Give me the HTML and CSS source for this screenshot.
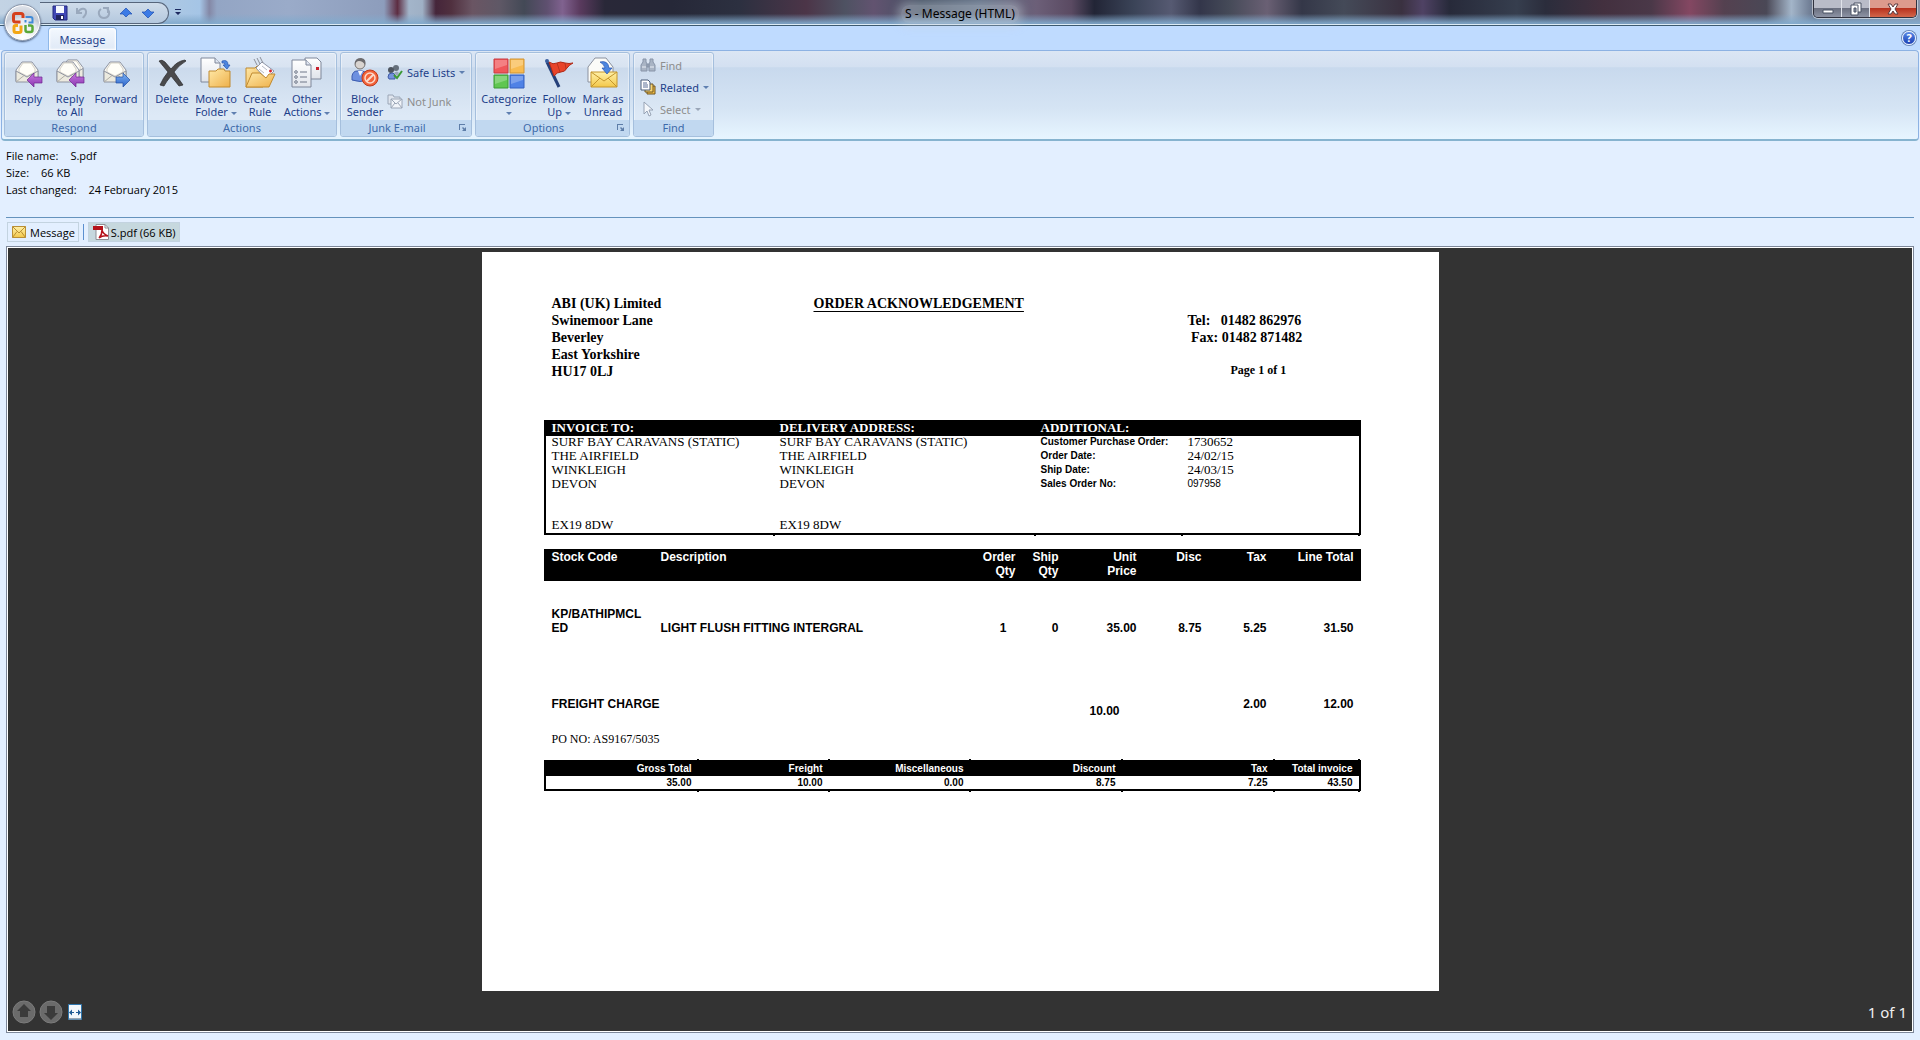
FILE: index.html
```html
<!DOCTYPE html>
<html lang="en">
<head>
  <meta charset="UTF-8" />
  <meta name="viewport" content="width=device-width, initial-scale=1.0" />
  <title>S - Message (HTML)</title>
  <link rel="stylesheet" href="styles.css">
</head>
<body>
  <!-- Shared gradients and the envelope used by several icons -->
  <svg class="defs" width="0" height="0" aria-hidden="true">
    <defs>
      <linearGradient id="gFolder" x1="0" y1="0" x2="1" y2="1"><stop offset="0" stop-color="#ffe9a8"/><stop offset="1" stop-color="#eeb04a"/></linearGradient>
      <linearGradient id="gPaper" x1="0" y1="0" x2="0" y2="1"><stop offset="0" stop-color="#ffffff"/><stop offset="1" stop-color="#dfe3ea"/></linearGradient>
      <linearGradient id="gPurple" x1="0" y1="0" x2="0" y2="1"><stop offset="0" stop-color="#c77be0"/><stop offset="1" stop-color="#8a35b0"/></linearGradient>
      <linearGradient id="gBlue" x1="0" y1="0" x2="0" y2="1"><stop offset="0" stop-color="#7db4f5"/><stop offset="1" stop-color="#2c62c8"/></linearGradient>
      <linearGradient id="gYellow" x1="0" y1="0" x2="0" y2="1"><stop offset="0" stop-color="#fff0a8"/><stop offset="1" stop-color="#f3c84a"/></linearGradient>
      <symbol id="envelope" viewBox="0 0 24 24">
        <path d="M1 10 7 2h10l6 8v11H1z" fill="#f7f6f1" stroke="#8e93a0"/>
        <path d="M4 12V9l4-6h8l4 6v3l-8 4z" fill="#fffef8" stroke="#c6c2b4" stroke-width=".7"/>
        <path d="M1 11 12 17l11-6v11H1z" fill="#eceadf" stroke="#8e93a0"/>
        <path d="M1 22 9 15.500M23 22 15 15.500" stroke="#b0aea6" fill="none"/>
      </symbol>
    </defs>
  </svg>

  <header class="titlebar">
    <div class="quick-access">
      <button aria-label="Save"><svg viewBox="0 0 16 16" width="16" height="16"><path d="M1 1h14v14H3l-2-2z" fill="#3f46b5" stroke="#23287e"/><path d="M4 1h8v7H4z" fill="#f4f7ff"/><path d="M4 10h8v5H4z" fill="#1f2360"/><path d="M9 11h2v3H9z" fill="#fff"/></svg></button>
      <button aria-label="Undo" disabled><svg viewBox="0 0 16 16" width="16" height="16" fill="none" stroke="#9aa9bd" stroke-width="2"><path d="M3 3v5h5M4 7c3-5 9-4 8 1-.500 3-2 3-3 5"/></svg></button>
      <button aria-label="Redo" disabled><svg viewBox="0 0 16 16" width="16" height="16" fill="none" stroke="#9aa9bd" stroke-width="2"><path d="M5 4C1 7 3 13 8 13s7-6 3-9M12 8V3H7"/></svg></button>
      <button aria-label="Previous item"><svg viewBox="0 0 16 16" width="16" height="16"><path d="M8 3 14 9h-3l-3 3-3-3H2z" fill="#3c7be6" stroke="#1c4db0" stroke-width=".7"/></svg></button>
      <button aria-label="Next item"><svg viewBox="0 0 16 16" width="16" height="16"><path d="M8 13 14 7h-3L8 4 5 7H2z" fill="#3c7be6" stroke="#1c4db0" stroke-width=".7"/></svg></button>
    </div>
    <button class="customize" aria-label="Customize Quick Access Toolbar"><svg viewBox="0 0 8 8" width="8" height="8"><path d="M1 0h6v1H1zM1 3h6L4 6z" fill="#1d2a60"/></svg></button>
    <h1 class="window-title">S - Message (HTML)</h1>
    <div class="window-buttons">
      <button class="min" aria-label="Minimize"><svg viewBox="0 0 14 14" width="14" height="14"><path d="M2 8h10v3H2z" fill="#fff" stroke="#4b5264"/></svg></button>
      <button class="restore" aria-label="Restore Down"><svg viewBox="0 0 14 14" width="14" height="14"><path d="M5 1h7v9H5z" fill="#fff" stroke="#4b5264"/><path d="M2 3h7v10H2z" fill="#fff" stroke="#4b5264"/><path d="M5 6h2v4H5z" fill="#8d95a6" stroke="#4b5264"/></svg></button>
      <button class="close" aria-label="Close"><svg viewBox="0 0 14 14" width="14" height="14"><path d="M2 2h3l2 3 2-3h3L9 7l3 5H9L7 9l-2 3H2l3-5z" fill="#fff" stroke="#5b3a3f"/></svg></button>
    </div>
  </header>

  <button class="office-button" aria-label="Office Button">
    <svg viewBox="0 0 24 24" width="24" height="24" fill="none" stroke-width="3">
      <path d="M9.500 11H4.500q-2 0-2-2V4.500q0-2 2-2H10q2 0 2 2V7" stroke="#d5401c"/>
      <path d="M14.500 6h5q2 0 2 2v3.500h-4" stroke="#3f8ad8" stroke-width="2"/>
      <path d="M14.500 9v2.500" stroke="#3f8ad8" stroke-width="2"/>
      <path d="M10 14.500V20q0 1.500-2 1.500H5q-2 0-2-2V16q0-1.500 2-1.500h2" stroke="#f3a716"/>
      <path d="M14.500 14v5q0 2 2 2h3q2 0 2-2v-3q0-1.500-2-1.500H17" stroke="#5aa83a" stroke-width="2.500"/>
    </svg>
  </button>

  <nav class="tab-strip">
    <button class="ribbon-tab">Message</button>
    <button class="help" aria-label="Help">?</button>
  </nav>

  <div class="ribbon">
    <section class="group respond">
      <div class="tools">
        <button class="big"><svg viewBox="0 0 32 32" width="32" height="32"><use href="#envelope" x="3" y="3" width="24" height="24"/><path d="M15 23l7-7v4h8v6h-8v4z" fill="url(#gPurple)" stroke="#6d2790" stroke-width=".7"/></svg><span>Reply</span></button>
        <button class="big"><svg viewBox="0 0 32 32" width="32" height="32"><use href="#envelope" x="7" y="1" width="23" height="23"/><use href="#envelope" x="2" y="3" width="24" height="24"/><path d="M15 23l7-7v4h8v6h-8v4z" fill="url(#gPurple)" stroke="#6d2790" stroke-width=".7"/></svg><span>Reply<br>to All</span></button>
        <button class="big wide"><svg viewBox="0 0 32 32" width="32" height="32"><use href="#envelope" x="3" y="3" width="24" height="24"/><path d="M30 23l-7-7v4h-7v6h7v4z" fill="url(#gBlue)" stroke="#234fa0" stroke-width=".7"/></svg><span>Forward</span></button>
      </div>
      <h2>Respond</h2>
    </section>

    <section class="group actions">
      <div class="tools">
        <button class="big"><svg viewBox="0 0 32 32" width="32" height="32"><path d="M3 4q3-2 6 1l6 7q6-8 14-9l1 1q-7 4-12 11l9 13-4 1q-4-5-8-10-5 6-7 10l-4-1q3-7 8-13-5-6-9-11z" fill="#4a4a4c" stroke="#2a2a2c" stroke-width=".7"/></svg><span>Delete</span></button>
        <button class="big"><svg viewBox="0 0 32 32" width="32" height="32"><path d="M1 1h14l5 5v19H1z" fill="url(#gPaper)" stroke="#7e879a"/><path d="M15 1v5h5" fill="#dfe5f0" stroke="#7e879a"/><path d="M9 14h7l2-2h6l1 2h5v16H9z" fill="url(#gFolder)" stroke="#c08a30"/><path d="M22 4q6-2 6 4h2l-3 4-4-4h2q0-3-3-2z" fill="#4d86e0" stroke="#2855b0" stroke-width=".7"/></svg><span>Move to<br>Folder <i class="caret"></i></span></button>
        <button class="big"><svg viewBox="0 0 32 32" width="32" height="32"><path d="M2 11h9l2-2h6v21H2z" fill="url(#gFolder)" stroke="#c08a30"/><path d="M12 11 18 5l12 9-8 8z" fill="#fdfdff" stroke="#8f96a8"/><path d="M10 2l3 6M13 1l3 6M16 0l3 6" stroke="#8b8f99" fill="none"/><path d="M15 12l5 4M18 9l5 4" stroke="#b5bac6"/><path d="M25 14h3M26.500 12.500v3" stroke="#d5262e" stroke-width="1.500"/><path d="M2 30l6-14h8l6 5 3-4h6l-6 13z" fill="url(#gFolder)" stroke="#c08a30"/></svg><span>Create<br>Rule</span></button>
        <button class="big other"><svg viewBox="0 0 32 32" width="32" height="32"><path d="M14 1h12l4 4v17H14z" fill="url(#gPaper)" stroke="#7e879a"/><path d="M25 10h3v3h-3z" fill="#c8202c"/><path d="M1 3h14l5 5v22H1z" fill="url(#gPaper)" stroke="#7e879a"/><path d="M15 3v5h5" fill="#dfe5f0" stroke="#7e879a"/><g fill="none" stroke="#6f7788"><circle cx="5" cy="15" r="1.300"/><circle cx="5" cy="20" r="1.300"/><circle cx="5" cy="25" r="1.300"/><path d="M9 15h7M9 20h7M9 25h7"/></g></svg><span>Other<br>Actions <i class="caret"></i></span></button>
      </div>
      <h2>Actions</h2>
    </section>

    <section class="group junk">
      <div class="tools">
        <button class="big"><svg viewBox="0 0 32 32" width="32" height="32"><path d="M3 23V19q1-5 5-5h5q6 1 6 6v3q-8 3-16 0z" fill="#6d90e0" stroke="#3c5cb0"/><path d="M9 14h5l-3 5z" fill="#f2f5ff"/><circle cx="11" cy="7" r="5" fill="#d9d4d0" stroke="#77726f"/><path d="M6 8q-1-7 6-7 6 1 4 7-2-4-6-4-3 0-4 4z" fill="#6c6b6e"/><circle cx="21" cy="21" r="8" fill="#f2633a" stroke="#c03a1c"/><circle cx="21" cy="21" r="5" fill="none" stroke="#fbd9cc" stroke-width="1.500"/><path d="M17.500 24.500l7-7" stroke="#fbd9cc" stroke-width="2"/></svg><span>Block<br>Sender</span></button>
        <div class="stack two">
          <button class="small"><svg viewBox="0 0 16 16" width="16" height="16"><circle cx="9" cy="4" r="3" fill="#66707c"/><circle cx="4" cy="6" r="3" fill="#4d545e"/><path d="M1 13q0-4 4-4 3 0 3 3v3H2z" fill="#7593dc" stroke="#3e5aa6"/><path d="M7 9q3-3 5 0l-2 3z" fill="#9aa6bd"/><path d="M7 11l3 3 5-7" fill="none" stroke="#3c9a35" stroke-width="2"/></svg>Safe Lists <i class="caret"></i></button>
          <button class="small" disabled><svg viewBox="0 0 16 16" width="16" height="16" fill="#dfe5ee" stroke="#9ba6b6"><path d="M1 11V2h5l1 2h6v7z"/><path d="M4 6h11v9H4z" fill="#f1f4f9"/><path d="M4 6l5 5 6-5M4 15l4-5M15 15l-4-5" fill="none"/></svg>Not Junk</button>
        </div>
      </div>
      <h2>Junk E-mail</h2>
      <button class="launcher" aria-label="Junk E-mail options"><svg viewBox="0 0 8 8" width="8" height="8"><path d="M0 6V0h6v1H1v5zM7 3v4H3l1.500-1.500L3 4l1-1 1.500 1.500z" fill="#5d7da8"/></svg></button>
    </section>

    <section class="group options">
      <div class="tools">
        <button class="big wide"><svg viewBox="0 0 32 32" width="32" height="32"><path d="M1 2h14v14H1z" fill="#f0565a" stroke="#c83a40"/><path d="M17 2h14v14H17z" fill="#f8bb50" stroke="#d09232"/><path d="M1 18h14v13H1z" fill="#5fc651" stroke="#3a9a34"/><path d="M17 18h14v13H17z" fill="#4f82e6" stroke="#3460c0"/><path d="M2 3h12v5q-6 2-12 4zM18 3h12v5q-6 2-12 4zM2 19h12v4q-6 2-12 4zM18 19h12v4q-6 2-12 4z" fill="#fff" opacity=".25"/></svg><span>Categorize<br><i class="caret"></i></span></button>
        <button class="big"><svg viewBox="0 0 32 32" width="32" height="32"><path d="M4 5l12 25" stroke="#25407a" stroke-width="3"/><circle cx="4" cy="4" r="2" fill="#3a5fa0"/><path d="M6 5q4 3 8 1 3-2 8 0 4 1 8 0-4 2-6 5-2 4-6 4-4 0-7 4z" fill="#e8442a" stroke="#b02a18"/><path d="M14 6l3 9M22 6l1 6" stroke="#b93520" fill="none"/></svg><span>Follow<br>Up <i class="caret"></i></span></button>
        <button class="big"><svg viewBox="0 0 32 32" width="32" height="32"><path d="M1 10 8 1h11l7 9v15H1z" fill="#fbfbf8" stroke="#8b919e"/><path d="M4 15h26v15H4z" fill="url(#gYellow)" stroke="#c4952c"/><path d="M4 15l13 9 13-9M4 30l9-9M30 30l-9-9" fill="none" stroke="#c4952c"/><path d="M13 5q8-2 9 6h3l-5 6-5-6h3q-1-4-5-6z" fill="#4d86e0" stroke="#2855b0" stroke-width=".7"/></svg><span>Mark as<br>Unread</span></button>
      </div>
      <h2>Options</h2>
      <button class="launcher" aria-label="Tracking options"><svg viewBox="0 0 8 8" width="8" height="8"><path d="M0 6V0h6v1H1v5zM7 3v4H3l1.500-1.500L3 4l1-1 1.500 1.500z" fill="#5d7da8"/></svg></button>
    </section>

    <section class="group find">
      <div class="tools">
        <div class="stack three">
          <button class="small" disabled><svg viewBox="0 0 16 16" width="16" height="16" fill="#a9b4c4" stroke="#8794a8"><path d="M3 2h3v3l1 2v7H1V8l2-3zM10 2h3v3l2 3v6H9V7l1-2zM7 7h2v3H7z"/><path d="M2 10h4M10 10h4" stroke="#e9eef6"/></svg>Find</button>
          <button class="small"><svg viewBox="0 0 16 16" width="16" height="16"><path d="M7 7h8v8H7z" fill="#f5c044" stroke="#6e5420"/><path d="M5 5h8v8H5z" fill="#f9d573" stroke="#6e5420"/><path d="M1 1h7l2 2v8H1z" fill="#fff" stroke="#4b5c78"/><path d="M3 4h4M3 6h5M3 8h5" stroke="#5a6f96"/></svg>Related <i class="caret"></i></button>
          <button class="small" disabled><svg viewBox="0 0 16 16" width="16" height="16"><path d="M4 1v12l3-3 2 5 2-1-2-5h4z" fill="#f4f7fb" stroke="#96a2b4"/></svg>Select <i class="caret"></i></button>
        </div>
      </div>
      <h2>Find</h2>
    </section>
  </div>

  <dl class="file-info">
    <div><dt>File name:</dt><dd>S.pdf</dd></div>
    <div><dt>Size:</dt><dd>66 KB</dd></div>
    <div><dt>Last changed:</dt><dd>24 February 2015</dd></div>
  </dl>

  <div class="attachments">
    <button class="attachment"><svg viewBox="0 0 14 12" width="14" height="12"><path d="M.5.500h13v11H.500z" fill="url(#gYellow)" stroke="#b98f35"/><path d="M.5.500 7 7l6.500-6.500M.500 11.500 5 5.500M13.500 11.500 9 5.500" fill="none" stroke="#b98f35"/></svg>Message</button>
    <span class="divider"></span>
    <button class="attachment selected"><svg viewBox="0 0 16 16" width="16" height="16"><path d="M3 .500h9l3.500 3.500v11.500H3z" fill="#fff" stroke="#8f8f96"/><path d="M12 .500V4h3.500" fill="none" stroke="#8f8f96"/><path d="M0 2h10v4H0z" fill="#b5121b"/><path d="M9 6q1 4 6 6-5-1-9 2 3-3 3-8z" fill="none" stroke="#b5121b" stroke-width="1.500"/></svg>S.pdf (66 KB)</button>
  </div>

  <main class="viewer">
    <article class="sheet">
      <header class="letterhead">
        <address>ABI (UK) Limited<br>Swinemoor Lane<br>Beverley<br>East Yorkshire<br>HU17 0LJ</address>
        <h2>ORDER ACKNOWLEDGEMENT</h2>
        <div class="contact">
          <p>Tel: &nbsp; 01482 862976<br>&nbsp;Fax: 01482 871482</p>
          <p class="page-no">Page 1 of 1</p>
        </div>
      </header>

      <table class="parties">
        <colgroup><col class="c-invoice"><col class="c-delivery"><col class="c-label"><col></colgroup>
        <thead>
          <tr><th>INVOICE TO:</th><th>DELIVERY ADDRESS:</th><th colspan="2">ADDITIONAL:</th></tr>
        </thead>
        <tbody>
          <tr><td>SURF BAY CARAVANS (STATIC)</td><td>SURF BAY CARAVANS (STATIC)</td><td class="label">Customer Purchase Order:</td><td>1730652</td></tr>
          <tr><td>THE AIRFIELD</td><td>THE AIRFIELD</td><td class="label">Order Date:</td><td>24/02/15</td></tr>
          <tr><td>WINKLEIGH</td><td>WINKLEIGH</td><td class="label">Ship Date:</td><td>24/03/15</td></tr>
          <tr><td>DEVON</td><td>DEVON</td><td class="label">Sales Order No:</td><td class="order-no">097958</td></tr>
          <tr class="postcode"><td>EX19 8DW</td><td>EX19 8DW</td><td></td><td></td></tr>
        </tbody>
      </table>

      <table class="lines">
        <colgroup><col class="c-code"><col><col class="c-order"><col class="c-ship"><col class="c-unit"><col class="c-disc"><col class="c-tax"><col class="c-total"></colgroup>
        <thead>
          <tr><th>Stock Code</th><th>Description</th><th>Order<br>Qty</th><th>Ship<br>Qty</th><th>Unit<br>Price</th><th>Disc</th><th>Tax</th><th>Line Total</th></tr>
        </thead>
        <tbody>
          <tr class="item"><td>KP/BATHIPMCL<br>ED</td><td>LIGHT FLUSH FITTING INTERGRAL</td><td class="qty">1</td><td>0</td><td>35.00</td><td>8.75</td><td>5.25</td><td>31.50</td></tr>
          <tr class="freight"><td colspan="2">FREIGHT CHARGE</td><td></td><td></td><td class="charge">10.00</td><td></td><td>2.00</td><td>12.00</td></tr>
        </tbody>
      </table>

      <p class="po-number">PO NO: AS9167/5035</p>

      <table class="totals">
        <colgroup><col class="c-gross"><col class="c-freight"><col class="c-misc"><col class="c-discount"><col class="c-discount"><col></colgroup>
        <thead>
          <tr><th>Gross Total</th><th>Freight</th><th>Miscellaneous</th><th>Discount</th><th>Tax</th><th>Total invoice</th></tr>
        </thead>
        <tbody>
          <tr><td>35.00</td><td>10.00</td><td>0.00</td><td>8.75</td><td>7.25</td><td>43.50</td></tr>
        </tbody>
      </table>
    </article>

    <footer class="viewer-bar">
      <button class="round" aria-label="Previous page"><svg viewBox="0 0 24 24" width="24" height="24"><circle cx="12" cy="12" r="11" fill="#6b6b6b" stroke="#7c7c7c"/><path d="M12 4l7 7h-3v6H8v-6H5z" fill="#3b3b3b"/></svg></button>
      <button class="round" aria-label="Next page"><svg viewBox="0 0 24 24" width="24" height="24"><circle cx="12" cy="12" r="11" fill="#6b6b6b" stroke="#7c7c7c"/><path d="M12 20l7-7h-3V6H8v7H5z" fill="#3b3b3b"/></svg></button>
      <button class="fit" aria-label="Fit width"><svg viewBox="0 0 14 16" width="14" height="16"><path d="M.500.500h13v15H.500z" fill="#f3f7fb" stroke="#2f76ad"/><path d="M1 14h12v1.500H1z" fill="#9aa7b2"/><path d="M1 8.500 4 5.500V8h2v1H4v2.500zM13 8.500 10 5.500V8H8v1h2v2.500z" fill="#1f5b94"/></svg></button>
      <span class="page-count">1 of 1</span>
    </footer>
  </main>
</body>
</html>
```

FILE: styles.css
```css
:root {
  --window: #e3efff;
  --strip: #bfdbff;
  --ribbon-text: #1e3f8a;
  --group-text: #3e6aaa;
  --disabled: #8d8d8d;
  --viewer: #333333;
}

* {
  box-sizing: border-box;
}

body {
  margin: 0;
  min-height: 100vh;
  display: flex;
  flex-direction: column;
  position: relative;
  background: var(--window);
  font-family: 'Noto Sans', 'Open Sans', sans-serif;
  font-size: 11px;
  color: #000;
}

button {
  font: inherit;
  color: inherit;
  background: none;
  border: none;
  padding: 0;
}

h1, h2, p, dl, dd {
  margin: 0;
}

.defs {
  position: absolute;
}

/* Title bar */
.titlebar {
  height: 26px;
  display: flex;
  align-items: flex-start;
  border-bottom: 1px solid #3d5a70;
  box-shadow: inset 0 -1px #dcebf5;
  background:
    linear-gradient(to bottom, rgba(150, 180, 210, 0) 55%, rgba(130, 170, 205, 0.9) 92%),
    linear-gradient(to right, #c3d3e4 0, #b0c9e2 8%, #a5c5e6 10.4%, #8488a6 10.9%, #93a5c4 11.3%,
      #9aabc9 15%, #8d9dbc 20%, #5d2d42 20.7%, #a3b5ca 21.3%, #9fb0c5 22%, #45253a 22.7%,
      #50303f 23.5%, #6a5563 24.6%, #5f5866 26%, #434956 27.3%, #5f5070 28.5%, #80628f 29.3%,
      #5a3a5e 30.2%, #292838 31.5%, #262838 35%, #2c3040 38.5%, #4c3548 42%, #4e5262 44%,
      #625370 45.5%, #435062 48%, #5b6a80 51%, #6c5f78 54%, #5a4a62 55.8%, #222536 57%,
      #3a4357 59%, #565a72 61%, #33364a 62.5%, #454a58 64%, #6a6074 66%, #343748 67.8%,
      #444a58 70%, #3a3140 73%, #4f4264 74.1%, #272a3a 75.5%, #363e4e 79%, #2b2d3c 80.5%,
      #43303f 83.5%, #4a3848 86%, #844762 88%, #544150 89.8%, #4a4856 92%, #a3b5c9 93.3%,
      #65728a 94.5%, #8793a8 100%);
}

.quick-access {
  display: flex;
  align-items: center;
  gap: 6px;
  height: 22px;
  margin: 2px 0 0 40px;
  padding: 0 12px;
  border: 1px solid #56657b;
  border-left: none;
  border-radius: 0 12px 12px 0;
  background: linear-gradient(#cfdcea, #b4c8de);
}

.quick-access button,
.customize,
.window-buttons button {
  display: flex;
  align-items: center;
  justify-content: center;
}

.customize {
  height: 25px;
  width: 18px;
}

.window-title {
  position: absolute;
  left: 50%;
  top: 5px;
  transform: translateX(-50%);
  padding: 0 4px;
  border-radius: 8px;
  font-size: 12px;
  font-weight: 400;
  line-height: 18px;
  background: rgba(200, 208, 218, 0.4);
  box-shadow: 0 0 8px 4px rgba(200, 208, 218, 0.4);
}

.window-buttons {
  display: flex;
  height: 18px;
  margin: 0 3px 0 auto;
  border: 1px solid #30323f;
  border-top: none;
  border-radius: 0 0 5px 5px;
  overflow: hidden;
  box-shadow: 0 0 0 1px rgba(255, 255, 255, 0.5);
}

.window-buttons button {
  width: 28px;
  border-right: 1px solid #e0e3ea;
  background: linear-gradient(#b9bcc8 45%, #6b7080 50%, #8d93a4);
}

.window-buttons .close {
  width: 46px;
  border-right: none;
  background: linear-gradient(#dd9a8c 45%, #b8321e 50%, #d3664a);
}

.office-button {
  position: absolute;
  left: 4px;
  top: 4px;
  width: 37px;
  height: 37px;
  display: flex;
  align-items: center;
  justify-content: center;
  border-radius: 50%;
  border: 1px solid #8a95a8;
  background: radial-gradient(circle at 50% 90%, #ffffff 0, #e8ebf0 45%, #c4cad6 60%, #f1f3f7 100%);
  box-shadow: 0 1px 2px #44597a, inset 0 0 0 1px #fff;
}

/* Tab strip */
.tab-strip {
  display: flex;
  align-items: flex-end;
  height: 24px;
  padding: 0 4px 0 48px;
  background: var(--strip);
}

.ribbon-tab {
  width: 69px;
  height: 23px;
  color: var(--ribbon-text);
  border: 1px solid #8fb8e8;
  border-bottom: none;
  border-radius: 4px 4px 0 0;
  background: linear-gradient(#f3f8fe, #dfe9f6);
  box-shadow: inset 0 0 2px 1px #fff;
}

.help {
  width: 14px;
  height: 14px;
  margin: 0 0 5px auto;
  border-radius: 50%;
  border: 1px solid #e9f1fc;
  background: linear-gradient(#5a8ae8, #1b3fb4);
  box-shadow: 0 0 0 1px #6a86b8;
  color: #fff;
  font-weight: 700;
  line-height: 12px;
}

/* Ribbon */
.ribbon {
  display: flex;
  gap: 3px;
  height: 91px;
  margin: 0 1px 1px;
  padding: 1px 2px 2px;
  border: 1px solid #8db2e3;
  border-bottom: 2px solid #86b3cf;
  border-radius: 4px;
  background: linear-gradient(#dbe6f4 0, #d3e0f1 18%, #c8d9ed 19%, #d5e4f4 65%, #e7f5ff 100%);
}

.group {
  position: relative;
  display: flex;
  flex-direction: column;
  border: 1px solid #a5bfdd;
  border-radius: 3px;
  background: linear-gradient(#e0e9f5 0, #d8e3f1 17%, #cbdaec 18%, #dde9f6 75%);
  box-shadow: inset 0 0 0 1px rgba(255, 255, 255, 0.4);
  overflow: hidden;
}

.respond { width: 140px; }
.actions { width: 190px; }
.junk { width: 132px; }
.options { width: 155px; }
.find { width: 81px; }

.group h2 {
  height: 16px;
  font-size: 11px;
  font-weight: 400;
  line-height: 16px;
  text-align: center;
  color: var(--group-text);
  background: #c1d8f0;
}

.junk h2,
.options h2 {
  padding-right: 18px;
}

.tools {
  flex: 1;
  display: flex;
  padding: 4px 2px 0;
}

.big {
  flex: 0 0 44px;
  display: flex;
  flex-direction: column;
  align-items: center;
  color: var(--ribbon-text);
  line-height: 13px;
  white-space: nowrap;
}

.respond .big {
  flex-basis: 42px;
}

.respond .wide {
  flex-basis: 50px;
}

.actions .other {
  flex-basis: 50px;
}

.options .tools {
  padding-left: 5px;
}

.options .wide {
  flex-basis: 56px;
}

.big span {
  margin-top: 3px;
}

.caret {
  display: inline-block;
  border: 3px solid transparent;
  border-top-color: #5f7fb0;
  border-bottom: none;
  vertical-align: middle;
}

.stack {
  display: flex;
  flex-direction: column;
}

.stack.two {
  gap: 13px;
  padding-top: 7px;
}

.stack.three {
  gap: 6px;
  padding: 0 4px;
}

.small {
  display: flex;
  align-items: center;
  gap: 4px;
  height: 16px;
  color: var(--ribbon-text);
  white-space: nowrap;
}

.small:disabled {
  color: var(--disabled);
}

.small:disabled .caret {
  border-top-color: #9aa6b8;
}

.launcher {
  position: absolute;
  right: 4px;
  bottom: 4px;
  width: 8px;
  height: 8px;
  display: flex;
}

/* Attachment details */
.file-info {
  margin: 5px 6px 0;
  padding-bottom: 19px;
  border-bottom: 1px solid #6593bd;
  font-family: 'Open Sans', 'Noto Sans', sans-serif;
  line-height: 17px;
}

.file-info div {
  display: flex;
  gap: 12px;
}

.attachments {
  display: flex;
  align-items: center;
  gap: 4px;
  padding: 4px 7px;
  font-family: 'Open Sans', 'Noto Sans', sans-serif;
}

.attachment {
  display: flex;
  align-items: center;
  gap: 4px;
  height: 20px;
  padding: 0 3px 0 4px;
  border: 1px solid #c3d3e0;
}

.attachment.selected {
  gap: 2px;
  background: #c6d8de;
}

.divider {
  width: 1px;
  height: 16px;
  background: #5b8fd0;
}

/* Preview pane */
.viewer {
  flex: 1;
  display: flex;
  flex-direction: column;
  margin: 0 6px 7px;
  padding-top: 5px;
  border: 1px solid #7d8799;
  outline: 1px solid #ffffff;
  outline-offset: -2px;
  background: var(--viewer);
}

.sheet {
  width: 100%;
  max-width: 957px;
  min-height: 739px;
  margin: 0 auto;
  padding: 43px 78px 0 62px;
  background: #fff;
  font-family: 'Liberation Serif', serif;
  font-size: 13px;
  line-height: 14px;
}

.letterhead {
  display: grid;
  grid-template-columns: 262px 374px auto;
  height: 125px;
  padding-left: 8px;
  font-size: 14px;
  font-weight: 700;
  line-height: 17px;
}

.letterhead address {
  font-style: normal;
}

.letterhead h2 {
  font-size: 14px;
  text-decoration: underline;
  text-underline-offset: 3px;
}

.contact {
  padding-top: 17px;
  white-space: nowrap;
}

.page-no {
  margin: 16px 0 0 43px;
  font-size: 12px;
}

table {
  width: 100%;
  table-layout: fixed;
  border-collapse: separate;
  border-spacing: 0;
}

th {
  background: #000;
  color: #fff;
  text-align: left;
}

th, td {
  position: relative;
  padding: 0 7px;
  white-space: nowrap;
}

.parties {
  border: 2px solid #000;
  border-top: none;
}

.parties th,
.parties td {
  height: 14px;
  padding: 0 6px;
}

.parties td {
  line-height: 12px;
  vertical-align: top;
}

.parties th {
  height: 16px;
}

.c-invoice { width: 228px; }
.c-delivery { width: 261px; }
.c-label { width: 147px; }

.parties .label {
  font-family: 'Liberation Sans', sans-serif;
  font-size: 10px;
  font-weight: 700;
}

.parties .order-no {
  font-family: 'Liberation Sans', sans-serif;
  font-size: 10px;
}

.parties .postcode td {
  height: 41px;
  padding-top: 27px;
}

/* Short marks where the column lines stop */
.postcode td::after,
.totals td::after,
.totals th::after {
  content: '';
  position: absolute;
  right: -1px;
  width: 2px;
  height: 1px;
  background: #000;
}

.postcode td::after,
.totals td::after {
  bottom: -3px;
}

.totals th::after {
  top: -1px;
}

.lines {
  margin-top: 14px;
  font-family: 'Liberation Sans', sans-serif;
  font-size: 12px;
  font-weight: 700;
}

.lines th,
.lines td {
  text-align: right;
}

.lines th {
  height: 32px;
  padding-top: 1px;
  vertical-align: top;
}

.lines th:nth-child(-n+2),
.lines td:first-child,
.item td:nth-child(2) {
  padding-left: 8px;
  text-align: left;
}

.c-code { width: 109px; }
.c-order { width: 62px; }
.c-ship { width: 43px; }
.c-unit { width: 78px; }
.c-disc { width: 65px; }
.c-tax { width: 65px; }
.c-total { width: 87px; }

.item td {
  padding-top: 26px;
  vertical-align: bottom;
}

.item .qty {
  padding-right: 16px;
}

.freight td {
  padding-top: 62px;
  vertical-align: top;
}

.freight .charge {
  padding-top: 69px;
  padding-right: 24px;
}

.po-number {
  padding: 14px 8px;
  font-size: 12px;
}

.totals {
  border: 2px solid #000;
  border-top: none;
  font-family: 'Liberation Sans', sans-serif;
  font-size: 10px;
  font-weight: 700;
}

.totals th,
.totals td {
  padding-right: 6px;
  text-align: right;
  height: 13px;
  line-height: 13px;
}

.totals th {
  height: 16px;
}

.c-gross { width: 152px; }
.c-freight { width: 131px; }
.c-misc { width: 141px; }
.c-discount { width: 152px; }

.viewer-bar {
  display: flex;
  align-items: center;
  gap: 3px;
  height: 38px;
  margin-top: auto;
  padding: 0 6px 2px 5px;
  color: #f0f0f0;
}

.viewer-bar button {
  display: flex;
}

.fit {
  margin-left: 2px;
}

.page-count {
  margin-left: auto;
  font-size: 15px;
}
```
